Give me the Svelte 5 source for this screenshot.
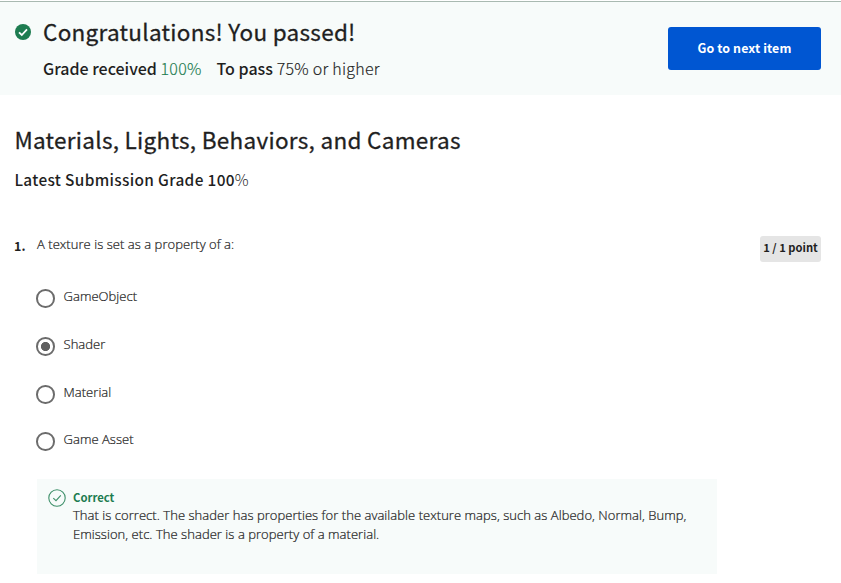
<script>
  const options = [
    { label: 'GameObject', height: 48 },
    { label: 'Shader', height: 48 },
    { label: 'Material', height: 47 },
    { label: 'Game Asset', height: 48 }
  ];
  let selected = $state('Shader');
</script>

<div class="page">
  <header class="banner">
    <svg class="passed" width="16" height="16" viewBox="0 0 16 16" aria-hidden="true">
      <circle cx="8" cy="8" r="8" fill="#1d7c50" />
      <path d="M4 8.3 6.8 11 12 5.4" fill="none" stroke="#fff" stroke-width="1.8" />
    </svg>
    <div class="result">
      <h1>Congratulations! You passed!</h1>
      <p class="grades">
        <span class="received"><b>Grade received</b> <span class="green">100%</span></span>
        <span class="required"><b>To pass</b> 75% or higher</span>
      </p>
    </div>
    <button class="next">Go to next item</button>
  </header>

  <main>
    <h2>Materials, Lights, Behaviors, and Cameras</h2>
    <p class="latest">Latest Submission Grade 100<span class="percent">%</span></p>

    <section class="question">
      <span class="number">1.</span>
      <div class="body">
        <p class="prompt">A texture is set as a property of a:</p>
        <div class="options">
          {#each options as option}
            <label class="option" style="height: {option.height}px">
              <input type="radio" name="answer" value={option.label} bind:group={selected} />
              <span class="text">{option.label}</span>
            </label>
          {/each}
        </div>
        <div class="feedback">
          <svg width="18" height="18" viewBox="0 0 18 18" fill="none" stroke="#3d8f69" aria-hidden="true">
            <circle cx="9" cy="9" r="8.2" stroke-width="1.1" />
            <path d="M5.3 9.2 8 11.7 12.8 6.4" stroke-width="1.1" />
          </svg>
          <div>
            <strong>Correct</strong>
            <p>That is correct. The shader has properties for the available texture maps, such as Albedo, Normal, Bump,<br />Emission, etc. The shader is a property of a material.</p>
          </div>
        </div>
      </div>
      <span class="points">1 / 1 point</span>
    </section>
  </main>
</div>

<style>
  :global(body) {
    margin: 0;
    background: #fff;
  }
  .page {
    width: 841px;
    height: 583px;
    overflow: hidden;
    box-sizing: border-box;
    padding-top: 1px;
    color: #1f1f1f;
    font-family: 'Noto Sans CJK SC', 'Noto Sans', sans-serif;
  }
  h1, h2, p {
    margin: 0;
    white-space: nowrap;
  }
  .banner {
    display: flex;
    align-items: flex-start;
    box-sizing: border-box;
    height: 94px;
    padding: 0 20px 0 15px;
    border-top: 1px solid #a9b9b1;
    background: #f7fbfa;
  }
  .passed {
    margin-top: 22px;
    flex: none;
  }
  .result {
    flex: 1;
    margin: 11px 0 0 12px;
  }
  h1, h2 {
    font-size: 22.5px;
    font-weight: 400;
    line-height: 36px;
    letter-spacing: 0.28px;
    -webkit-text-stroke: 0.3px currentColor;
  }
  .grades {
    display: flex;
    gap: 15px;
    margin-top: 6px;
    font-size: 16px;
    font-weight: 300;
    line-height: 26px;
    letter-spacing: 0.05px;
    -webkit-text-stroke: 0.15px currentColor;
  }
  .grades b {
    font-weight: 500;
    letter-spacing: 0;
    -webkit-text-stroke: 0;
  }
  .green {
    color: #1d7c50;
    letter-spacing: 0.25px;
  }
  .required {
    letter-spacing: 0.25px;
  }
  .next {
    width: 153px;
    height: 43px;
    margin-top: 25px;
    padding: 0;
    border: 0;
    border-radius: 3px;
    background: #0056d2;
    color: #fff;
    font: 700 12.4px/43px 'Noto Sans CJK SC', sans-serif;
    letter-spacing: 0.1px;
  }
  main {
    padding: 26px 20px 0 14px;
  }
  h2 {
    padding-left: 0.4px;
    letter-spacing: 0.29px;
  }
  .latest {
    margin-top: 9px;
    padding-left: 0.4px;
    font-size: 15.4px;
    font-weight: 500;
    line-height: 26px;
    letter-spacing: 0.34px;
  }
  .percent {
    font-weight: 300;
  }
  .question {
    display: flex;
    align-items: flex-start;
    margin-top: 42px;
  }
  .number {
    width: 23px;
    margin-top: 2px;
    font-size: 12.5px;
    font-weight: 700;
    line-height: 20px;
  }
  .body {
    width: 680px;
    font-family: 'Open Sans', sans-serif;
    font-size: 13px;
    font-weight: 300;
    letter-spacing: 0.045px;
    -webkit-text-stroke: 0.22px currentColor;
  }
  .prompt {
    line-height: 20px;
  }
  .options {
    display: flex;
    flex-direction: column;
    margin-top: 33px;
  }
  .option {
    display: flex;
    align-items: flex-start;
  }
  input {
    appearance: none;
    box-sizing: border-box;
    width: 18.5px;
    height: 18.5px;
    margin: 2.2px 9px 0 -1px;
    border: 2px solid #6c6c6c;
    border-radius: 50%;
    background: #fff;
  }
  input:checked {
    background: radial-gradient(circle, #606060 4.2px, #fff 5px);
  }
  .text {
    line-height: 18px;
  }
  .feedback {
    display: flex;
    gap: 7px;
    box-sizing: border-box;
    height: 95px;
    margin-top: 1px;
    padding: 10px 0 0 11px;
    background: #f7fbfa;
  }
  .feedback svg {
    flex: none;
  }
  .feedback strong {
    display: block;
    margin-top: -1px;
    color: #1d7c50;
    font: 700 11.3px/18px 'Noto Sans CJK SC', sans-serif;
    letter-spacing: 0;
    -webkit-text-stroke: 0;
  }
  .feedback p {
    line-height: 19px;
  }
  .points {
    box-sizing: border-box;
    width: 61px;
    height: 26px;
    margin: 2px 0 0 auto;
    border-radius: 3px;
    background: #e5e5e5;
    font-size: 11.2px;
    font-weight: 700;
    line-height: 23px;
    text-align: center;
    white-space: nowrap;
  }
</style>
